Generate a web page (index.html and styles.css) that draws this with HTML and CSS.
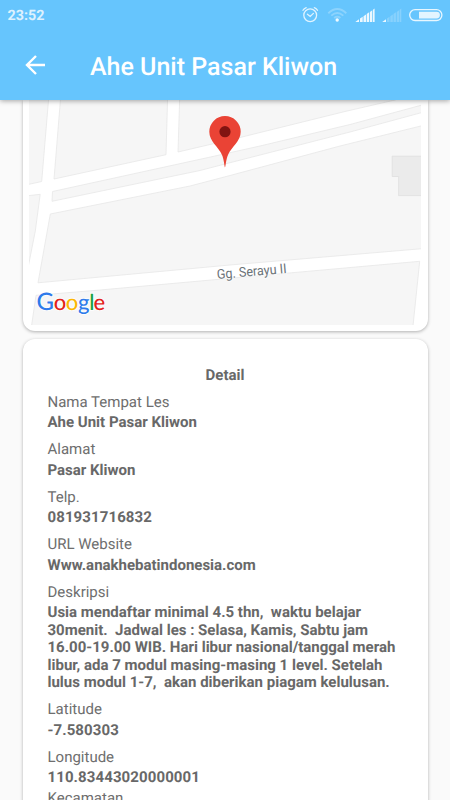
FILE: index.html
```html
<!DOCTYPE html>
<html lang="id">
<head>
<meta charset="utf-8">
<meta name="viewport" content="width=device-width, initial-scale=1">
<title>Ahe Unit Pasar Kliwon</title>
<link rel="stylesheet" href="styles.css">
</head>
<body>
<header class="header">
  <div class="status">
    <span class="clock">23:52</span>
    <svg class="status-icons" viewBox="300 0 150 30" width="150" height="30" fill="none" stroke="#fff">
      <g stroke-width="1.3" stroke-opacity=".8" stroke-linecap="round">
        <circle cx="310.2" cy="15.3" r="6.4"/>
        <path d="M307.4 14.2l2.8 2.2 3.2-3M303 10.3q1-2 3.2-2.7M317.5 10.3q-1-2-3.2-2.7"/>
      </g>
      <g stroke-width="1.9" stroke-opacity=".25">
        <path d="M328.3 13.2q9-8.2 18 0M331.3 15.6q6-5.2 12 0M334.2 18q3.1-2.5 6.2 0"/>
      </g>
      <circle cx="337.2" cy="20" r="1.7" fill="#fff" fill-opacity=".9" stroke="none"/>
      <g fill="#fff" fill-opacity=".88" stroke="none">
        <path d="M355.3 22l3.7-2.8V22zM360 18.6l2.7-1.8V22H360zM363.5 16.2l2.5-1.8V22h-2.5zM366.7 13.9l2.4-1.6V22h-2.4zM369.9 11.9l2.4-1.6V22h-2.4zM373 9.8l1.6-1.2V22H373z"/>
        <path d="M382.2 22l3.8-2.8V22z"/>
      </g>
      <path fill="#fff" fill-opacity=".22" stroke="none" d="M387 18.6l2.5-1.8V22H387zM390.3 16.2l2.5-1.8V22h-2.5zM393.5 13.9l2.4-1.6V22h-2.4zM396.7 11.9l2.4-1.6V22h-2.4zM399.7 9.8l1.6-1.2V22h-1.6z"/>
      <rect x="409.7" y="9.7" width="32.2" height="10.8" rx="5.4" stroke-width="1.3" stroke-opacity=".85"/>
      <path d="M419 11.7h17.5a3.4 3.4 0 0 1 0 6.8H419z" fill="#fff" fill-opacity=".82" stroke="none"/>
    </svg>
  </div>
  <div class="toolbar">
    <svg class="back" viewBox="0 0 22 22" width="22" height="22" fill="none" stroke="#fff" stroke-width="2.4"><path d="M21 11H3M12 2L3 11l9 9"/></svg>
    <h1 class="title">Ahe Unit Pasar Kliwon</h1>
  </div>
</header>
<main class="content">
  <section class="card map-card">
    <svg class="map" viewBox="29 100 392 225" width="392" height="225">
      <g fill="#f6f6f6" stroke="#e7e7e7" stroke-width=".8">
        <path d="M28 98H48.7L41.7 181.5L28 184.5z"/>
        <path d="M60.6 98H167.6L166 154.7L54 179z"/>
        <path d="M179.7 98H400L395 100L345 111.5L240 137.5L178 152z"/>
        <path d="M52.5 191.5L215 156L260 146L350 124.5L422 105V112.5L350 132L225 164L200 170.5L52 201.3z"/>
        <path d="M50.3 214L190 186L230 175.5L340 146L422 125.7V248.7L230 265L38 282.8z"/>
        <path d="M28 195.7L40.2 194.3L35.3 231L28 268z"/>
        <path d="M36 295.3L100 290L230 278.3L419.7 261.3L413 326H31.5z"/>
      </g>
      <path d="M392.2 156.2H422V195.6H398.6V176.5H392.2z" fill="#ebebeb" stroke="#dedede" stroke-width=".8"/>
      <path d="M225 167.4C224.2 166 224.3 160 221.8 154.5C218.7 147.3 209.3 141.3 209.3 131.8a15.7 15.7 0 0 1 31.4 0C240.7 141.3 231.3 147.3 228.2 154.5C225.7 160 225.8 166 225 167.4z" fill="#ea4335"/>
      <circle cx="225" cy="131.7" r="5.6" fill="#811411"/>
      <text class="street" transform="translate(217.2 279) rotate(-5)" textLength="70" lengthAdjust="spacingAndGlyphs">Gg. Serayu II</text>
      <text class="google" y="310.3"><tspan class="capital" x="36.4" fill="#2f7bea">G</tspan><tspan x="53.8" fill="#e2231a">o</tspan><tspan x="65.8" fill="#fbb605">o</tspan><tspan x="78" fill="#2f7bea">g</tspan><tspan x="89.2" fill="#16a23f">l</tspan><tspan x="93.4" fill="#e2231a">e</tspan></text>
    </svg>
  </section>
  <section class="card detail-card">
    <h2 class="heading">Detail</h2>
    <dl class="fields">
      <div class="field"><dt>Nama Tempat Les</dt><dd>Ahe Unit Pasar Kliwon</dd></div>
      <div class="field"><dt>Alamat</dt><dd>Pasar Kliwon</dd></div>
      <div class="field"><dt>Telp.</dt><dd class="number">081931716832</dd></div>
      <div class="field"><dt>URL Website</dt><dd>Www.anakhebatindonesia.com</dd></div>
      <div class="field"><dt>Deskripsi</dt><dd>Usia mendaftar minimal 4.5 thn,&nbsp; waktu belajar<br>30menit.&nbsp; Jadwal les : Selasa, Kamis, Sabtu jam<br>16.00-19.00 WIB. Hari libur nasional/tanggal merah<br>libur, ada 7 modul masing-masing 1 level. Setelah<br>lulus modul 1-7,&nbsp; akan diberikan piagam kelulusan.</dd></div>
      <div class="field"><dt>Latitude</dt><dd class="number">-7.580303</dd></div>
      <div class="field tight"><dt>Longitude</dt><dd class="number">110.83443020000001</dd></div>
      <div class="field"><dt>Kecamatan</dt></div>
    </dl>
  </section>
</main>
</body>
</html>
```
FILE: styles.css
```css
* { box-sizing: border-box; }
body {
  margin: 0;
  height: 800px;
  overflow: hidden;
  display: flex;
  flex-direction: column;
  background: #fafafa;
  color: #686868;
  font-family: Roboto, "Liberation Sans", sans-serif;
  text-rendering: geometricPrecision;
}
h1, h2, dl, dd { margin: 0; }
svg { display: block; }
.header {
  flex: none;
  position: relative;
  z-index: 1;
  height: 100px;
  background: #66c5fd;
  color: #fff;
  box-shadow: 0 1px 5px rgba(0, 0, 0, .35);
}
.status {
  display: flex;
  justify-content: space-between;
  height: 30px;
  padding-left: 7.5px;
}
.clock {
  font-size: 14.3px;
  font-weight: 700;
  line-height: 32px;
  opacity: .78;
}
.toolbar {
  display: flex;
  align-items: center;
  height: 70px;
  padding-left: 24px;
}
.title {
  margin-left: 44px;
  padding-top: 5px;
  font-size: 25px;
  font-weight: 500;
  line-height: 30px;
  white-space: nowrap;
}
.content {
  flex: 1;
  min-height: 0;
  display: flex;
  flex-direction: column;
  gap: 8px;
  padding: 0 22.5px;
}
.card {
  flex: none;
  background: #fff;
  box-shadow: 0 1px 3.5px rgba(0, 0, 0, .3);
}
.map-card {
  height: 231px;
  padding: 0 6.5px;
  border-radius: 0 0 12px 12px;
}
.street {
  font-size: 13.5px;
  fill: #6b7378;
  stroke: #fff;
  stroke-width: 2px;
  stroke-opacity: .6;
  paint-order: stroke;
}
.google {
  font-family: Lato, sans-serif;
  font-size: 22px;
  font-weight: 500;
  stroke: #fff;
  stroke-width: 1.5px;
  paint-order: stroke;
}
.capital { font-size: 24px; }
.detail-card {
  height: 500px;
  padding: 27px 25px 0;
  border-radius: 12px 12px 0 0;
}
.heading {
  font-size: 15px;
  font-weight: 700;
  line-height: 18px;
  text-align: center;
}
.fields { padding-top: 9.5px; }
.field { height: 47.5px; font-size: 15px; line-height: 17.5px; }
.field:nth-child(5) { height: 117.5px; }
.field.tight { height: 41px; }
dt { margin-bottom: 3px; color: #6e6e6e; white-space: nowrap; }
dd { font-weight: 700; white-space: nowrap; }
.number { letter-spacing: .1px; }
```
